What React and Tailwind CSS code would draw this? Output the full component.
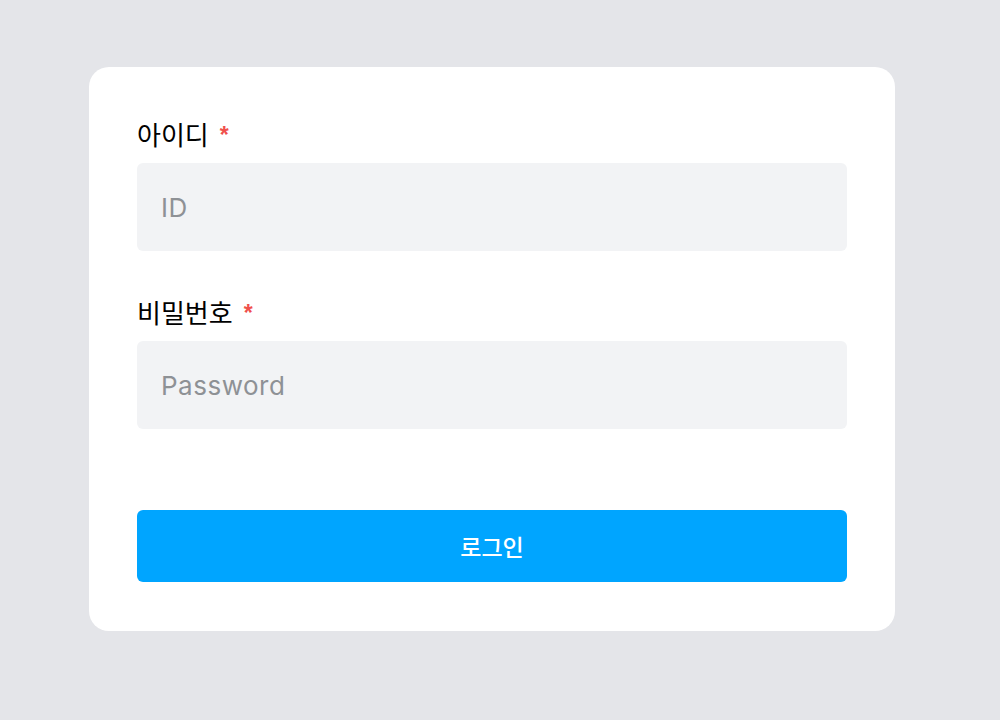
import React, { useState } from "react";

const KR = "font-['Noto_Sans_CJK_KR',sans-serif]";

function Field({ label, type, placeholder, value, onChange }) {
  return (
    <div>
      <label className={`flex items-center h-9 text-[26px] text-black ${KR}`}>
        {label}
        <span className="ml-[11px] mt-1 text-[23px] font-bold font-['Liberation_Sans',sans-serif] text-[#f0504c]">*</span>
      </label>
      <input
        type={type}
        value={value}
        onChange={(e) => onChange(e.target.value)}
        placeholder={placeholder}
        className="mt-3 w-full h-[88px] px-6 rounded-md bg-[#f2f3f5] text-[26px] tracking-[0.5px] font-['Inter',sans-serif] text-gray-800 placeholder:text-[#8e9195] outline-none"
      />
    </div>
  );
}

export default function App() {
  const [id, setId] = useState("");
  const [password, setPassword] = useState("");

  return (
    <div className="min-h-[720px] bg-[#e4e5e9] pt-[67px] pl-[89px]">
      <form
        onSubmit={(e) => e.preventDefault()}
        className="w-[806px] h-[564px] bg-white rounded-[20px] px-12 pt-12"
      >
        <Field label="아이디" type="text" placeholder="ID" value={id} onChange={setId} />
        <div className="mt-[42px]">
          <Field label="비밀번호" type="password" placeholder="Password" value={password} onChange={setPassword} />
        </div>
        <button
          type="submit"
          className={`mt-[81px] w-full h-[72px] rounded-md bg-[#00a5ff] text-white text-[23px] font-medium ${KR}`}
        >
          로그인
        </button>
      </form>
    </div>
  );
}
